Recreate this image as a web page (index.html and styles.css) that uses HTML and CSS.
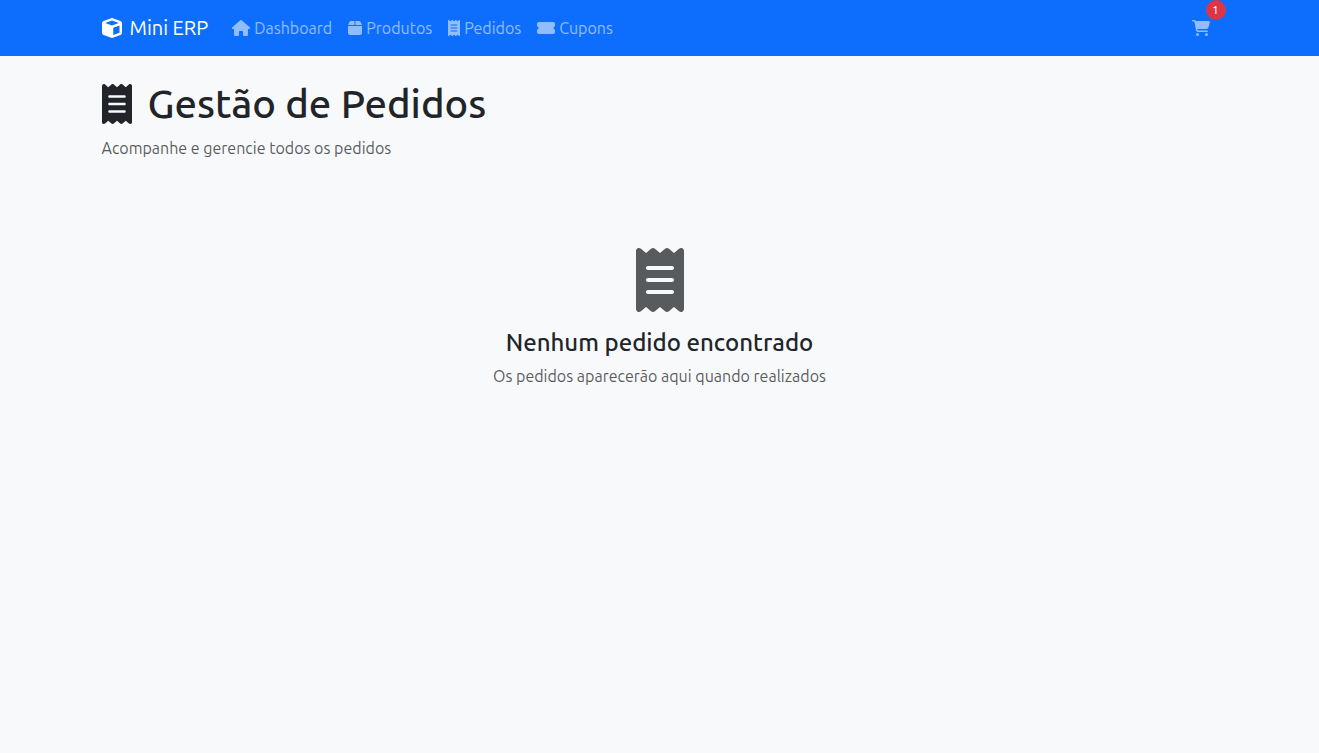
FILE: index.html
```html
<!DOCTYPE html>
<html lang="pt-BR">
<head>
<meta charset="utf-8">
<meta name="viewport" content="width=device-width, initial-scale=1">
<title>Mini ERP</title>
<link rel="stylesheet" href="styles.css">
</head>
<body>
<svg class="sprite" aria-hidden="true">
  <symbol id="cube" viewBox="0 0 512 512"><path d="M234.5 5.7c13.9-5 29.1-5 43.1 0l192 68.6C495 83.4 512 107.5 512 134.6V377.4c0 27-17 51.2-42.5 60.3l-192 68.6c-13.9 5-29.1 5-43.1 0l-192-68.6C17 428.6 0 404.5 0 377.4V134.6c0-27 17-51.2 42.5-60.3l192-68.6zM256 66L82.3 128 256 190l173.7-62L256 66zm32 368.6l160-57.1v-188L288 246.6v188z"/></symbol>
  <symbol id="house" viewBox="0 0 576 512"><path d="M575.8 255.5c0 18-15 32.1-32 32.1h-32l.7 160.2c0 2.7-.2 5.4-.5 8.1V472c0 22.1-17.9 40-40 40H456c-1.1 0-2.2 0-3.3-.1c-1.4 .1-2.8 .1-4.2 .1H416 392c-22.1 0-40-17.9-40-40V448 384c0-17.7-14.3-32-32-32H256c-17.7 0-32 14.3-32 32v64 24c0 22.1-17.9 40-40 40H160 128.1c-1.5 0-3-.1-4.5-.2c-1.2 .1-2.4 .2-3.6 .2H104c-22.1 0-40-17.9-40-40V360c0-.9 0-1.9 .1-2.8V287.6H32c-18 0-32-14-32-32.1c0-9 3-17 10-24L266.4 8c7-7 15-8 22-8s15 2 21 7L564.8 231.5c8 7 12 15 11 24z"/></symbol>
  <symbol id="box" viewBox="0 0 448 512"><path d="M50.7 58.5L0 160H208V32H93.7C75.5 32 58.9 42.3 50.7 58.5zM240 160H448L397.3 58.5C389.1 42.3 372.5 32 354.3 32H240V160zm208 32H0V416c0 35.3 28.7 64 64 64H384c35.3 0 64-28.7 64-64V192z"/></symbol>
  <symbol id="receipt" viewBox="0 0 384 512"><path d="M14 2.2C22.5-1.7 32.5-.3 39.6 5.8L80 40.4 120.4 5.8c9-7.7 22.3-7.7 31.2 0L192 40.4 232.4 5.8c9-7.7 22.2-7.7 31.2 0L304 40.4 344.4 5.8c7.1-6.1 17.1-7.5 25.6-3.6s14 12.4 14 21.8V488c0 9.4-5.5 17.9-14 21.8s-18.5 2.5-25.6-3.6L304 471.6l-40.4 34.6c-9 7.7-22.2 7.7-31.2 0L192 471.6l-40.4 34.6c-9 7.7-22.3 7.7-31.2 0L80 471.6 39.6 506.2c-7.1 6.1-17.1 7.5-25.6 3.6S0 497.4 0 488V24C0 14.6 5.5 6.1 14 2.2zM96 144c-8.8 0-16 7.2-16 16s7.2 16 16 16H288c8.8 0 16-7.2 16-16s-7.2-16-16-16H96zM80 352c0 8.8 7.2 16 16 16H288c8.8 0 16-7.2 16-16s-7.2-16-16-16H96c-8.8 0-16 7.2-16 16zM96 240c-8.8 0-16 7.2-16 16s7.2 16 16 16H288c8.8 0 16-7.2 16-16s-7.2-16-16-16H96z"/></symbol>
  <symbol id="ticket" viewBox="0 0 576 512"><path d="M0 128C0 92.7 28.7 64 64 64H512c35.3 0 64 28.7 64 64v64c0 8.8-7.4 15.7-15.7 18.6C541.5 217.1 528 235 528 256s13.5 38.9 32.3 45.4c8.3 2.9 15.7 9.8 15.7 18.6v64c0 35.3-28.7 64-64 64H64c-35.3 0-64-28.7-64-64V320c0-8.8 7.4-15.7 15.7-18.6C34.5 294.9 48 277 48 256s-13.5-38.9-32.3-45.4C7.4 207.7 0 200.8 0 192V128z"/></symbol>
  <symbol id="cart" viewBox="0 0 576 512"><path d="M0 24C0 10.7 10.7 0 24 0H69.5c22 0 41.5 12.8 50.6 32h411c26.3 0 45.5 25 38.6 50.4l-41 152.3c-8.5 31.4-37 53.3-69.5 53.3H170.7l5.4 28.5c2.2 11.3 12.1 19.5 23.6 19.5H488c13.3 0 24 10.7 24 24s-10.7 24-24 24H199.7c-34.6 0-64.3-24.6-70.7-58.5L77.4 54.5c-.7-3.8-4-6.5-7.9-6.5H24C10.7 48 0 37.3 0 24zM128 464a48 48 0 1 1 96 0 48 48 0 1 1 -96 0zm336-48a48 48 0 1 1 0 96 48 48 0 1 1 0-96z"/></symbol>
</svg>

<header class="navbar">
  <nav class="container navbar-row" aria-label="Principal">
    <a class="brand" href="#"><svg class="icon icon-brand"><use href="#cube"/></svg>Mini ERP</a>
    <ul class="nav-list">
      <li><a class="nav-link" href="#"><svg class="icon icon-wide"><use href="#house"/></svg>Dashboard</a></li>
      <li><a class="nav-link" href="#"><svg class="icon icon-box"><use href="#box"/></svg>Produtos</a></li>
      <li><a class="nav-link" href="#"><svg class="icon icon-narrow"><use href="#receipt"/></svg>Pedidos</a></li>
      <li><a class="nav-link" href="#"><svg class="icon icon-wide"><use href="#ticket"/></svg>Cupons</a></li>
    </ul>
    <a class="nav-link cart-link" href="#" aria-label="Carrinho"><svg class="icon icon-wide"><use href="#cart"/></svg><span class="badge">1</span></a>
  </nav>
</header>

<main class="container content">
  <h1 class="page-title"><svg class="icon icon-title"><use href="#receipt"/></svg>Gestão de Pedidos</h1>
  <p class="muted">Acompanhe e gerencie todos os pedidos</p>
  <section class="empty-state">
    <svg class="icon icon-empty"><use href="#receipt"/></svg>
    <h2 class="empty-title">Nenhum pedido encontrado</h2>
    <p class="muted">Os pedidos aparecerão aqui quando realizados</p>
  </section>
</main>
</body>
</html>
```

FILE: styles.css
```css
*,
*::before,
*::after {
  box-sizing: border-box;
}

body {
  margin: 0;
  background: #f8f9fa;
  color: #212529;
  font-family: Ubuntu, "Noto Sans", sans-serif;
  font-size: 16px;
  line-height: 24px;
}

h1,
h2,
p,
ul {
  margin: 0;
  padding: 0;
}

a {
  color: inherit;
  text-decoration: none;
}

.sprite {
  position: absolute;
  width: 0;
  height: 0;
}

.container {
  width: 100%;
  max-width: 1140px;
  margin: 0 auto;
  padding: 0 12px;
}

.icon {
  display: block;
  flex: none;
  height: 16px;
  fill: currentColor;
}

.icon-wide {
  width: 18px;
}

.icon-box {
  width: 14px;
}

.icon-narrow {
  width: 12px;
}

.icon-brand {
  width: 20px;
  height: 20px;
}

.icon-title {
  width: 30px;
  height: 40px;
}

.icon-empty {
  width: 48px;
  height: 64px;
  color: rgba(33, 37, 41, 0.75);
}

.navbar {
  padding: 8px 0;
  background: #0d6efd;
}

.navbar-row {
  display: flex;
  align-items: center;
}

.brand {
  display: flex;
  align-items: center;
  gap: 8px;
  margin-right: 16px;
  color: #fff;
  font-size: 20px;
  line-height: 30px;
}

.nav-list {
  display: flex;
  margin-right: auto;
  list-style: none;
}

.nav-link {
  display: flex;
  align-items: center;
  gap: 4px;
  min-height: 40px;
  padding: 8px;
  color: rgba(255, 255, 255, 0.55);
}

.nav-link:hover {
  color: rgba(255, 255, 255, 0.75);
}

.cart-link {
  position: relative;
}

.badge {
  position: absolute;
  top: -8px;
  right: -8px;
  width: 20px;
  height: 20px;
  border-radius: 50%;
  background: #dc3545;
  color: #fff;
  font-size: 12px;
  line-height: 20px;
  text-align: center;
}

.content {
  padding-top: 24px;
}

.page-title {
  display: flex;
  align-items: center;
  gap: 16px;
  margin-bottom: 8px;
  font-size: 40px;
  font-weight: 500;
  line-height: 48px;
}

.muted {
  color: rgba(33, 37, 41, 0.75);
}

.empty-state {
  display: flex;
  flex-direction: column;
  align-items: center;
  padding: 88px 0 48px;
  text-align: center;
}

.empty-title {
  margin: 16px 0 6px;
  font-size: 24px;
  font-weight: 500;
  line-height: 30px;
}
```
